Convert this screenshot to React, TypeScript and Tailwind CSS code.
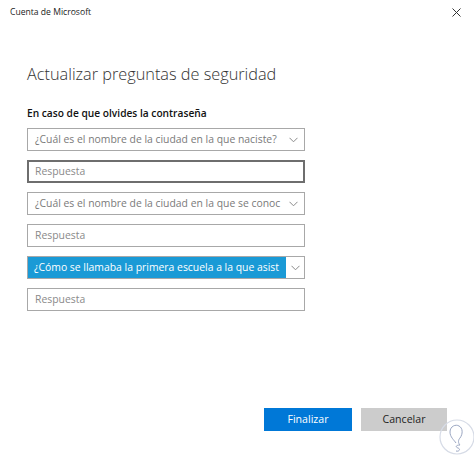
import React from "react";

const Chevron = ({ color = "#8a8a8a" }: { color?: string }) => (
  <svg width="9" height="6" viewBox="0 0 9 6" fill="none">
    <path d="M0.5 0.8 L4.5 4.8 L8.5 0.8" stroke={color} strokeWidth="1" />
  </svg>
);

const Select = ({ text }: { text: string }) => (
  <div className="flex h-[23px] w-[278px] items-center border border-[#a8a8a8] bg-white">
    <div className="flex-1 overflow-hidden whitespace-nowrap pl-[7px] text-[10.4px] text-[#7a7a7a]">{text}</div>
    <div className="flex w-[22px] shrink-0 justify-center">
      <Chevron />
    </div>
  </div>
);

const Input = ({ focused = false }: { focused?: boolean }) => (
  <div
    className={
      focused
        ? "flex h-[23px] w-[278px] items-center border-2 border-[#6e6e6e] bg-white pl-[6px] text-[10.4px] text-[#8a8a8a]"
        : "flex h-[23px] w-[278px] items-center border border-[#a8a8a8] bg-white pl-[7px] text-[10.4px] text-[#8a8a8a]"
    }
  >
    Respuesta
  </div>
);

export default function App() {
  return (
    <div
      className="relative flex h-[458px] w-[474px] flex-col overflow-hidden bg-white"
      style={{ fontFamily: '"Open Sans", "Noto Sans", sans-serif' }}
    >
      <div className="flex h-[24px] items-center justify-between pl-[10px] pr-[13px]">
        <span className="text-[8.6px] text-[#222]">Cuenta de Microsoft</span>
        <svg width="9" height="9" viewBox="0 0 9 9">
          <path d="M0.5 0.5 L8.5 8.5 M8.5 0.5 L0.5 8.5" stroke="#333" strokeWidth="1" />
        </svg>
      </div>
      <div className="flex flex-col pl-[27px]">
        <h1 className="mt-[38px] text-[16.3px] font-light leading-[24px] text-[#333]">
          Actualizar preguntas de seguridad
        </h1>
        <div className="mt-[20px] text-[10.2px] font-semibold leading-[14px] text-[#111]">
          En caso de que olvides la contraseña
        </div>
        <div className="mt-[8px] flex flex-col gap-[9px]">
          <Select text="¿Cuál es el nombre de la ciudad en la que naciste?" />
          <Input focused />
          <Select text="¿Cuál es el nombre de la ciudad en la que se conoc" />
          <Input />
          <div className="flex h-[23px] w-[278px] items-center border border-[#a8a8a8] bg-white">
            <div className="flex h-full w-[258px] items-center overflow-hidden whitespace-nowrap bg-[#1a9ad6] pl-[6px] text-[10.4px] text-white">
              ¿Cómo se llamaba la primera escuela a la que asist
            </div>
            <div className="flex flex-1 justify-center">
              <Chevron />
            </div>
          </div>
          <Input />
        </div>
      </div>
      <div className="mt-auto mb-[27px] flex justify-end gap-[9px] pr-[27px]">
        <button className="h-[23px] w-[88px] bg-[#0078d7] text-[10.6px] text-white">Finalizar</button>
        <button className="h-[23px] w-[86px] bg-[#cccccc] text-[10.6px] text-[#222]">Cancelar</button>
      </div>
      <svg className="absolute left-[438px] top-[418px]" width="38" height="40" viewBox="0 0 38 40" fill="none">
        <circle cx="19" cy="19" r="17" stroke="#d6dbe6" strokeWidth="1.2" />
        <path
          d="M12 14 C12 8 18 6 21 8 C25 10 25 16 22 20 C20 22 20 25 22 27 M22 27 C18 27 17 29 20 30 C23 31 21 34 18 33"
          stroke="#9aa6c2"
          strokeWidth="1"
        />
        <path d="M12 14 C12 19 16 22 18 25" stroke="#9aa6c2" strokeWidth="1" />
      </svg>
    </div>
  );
}
